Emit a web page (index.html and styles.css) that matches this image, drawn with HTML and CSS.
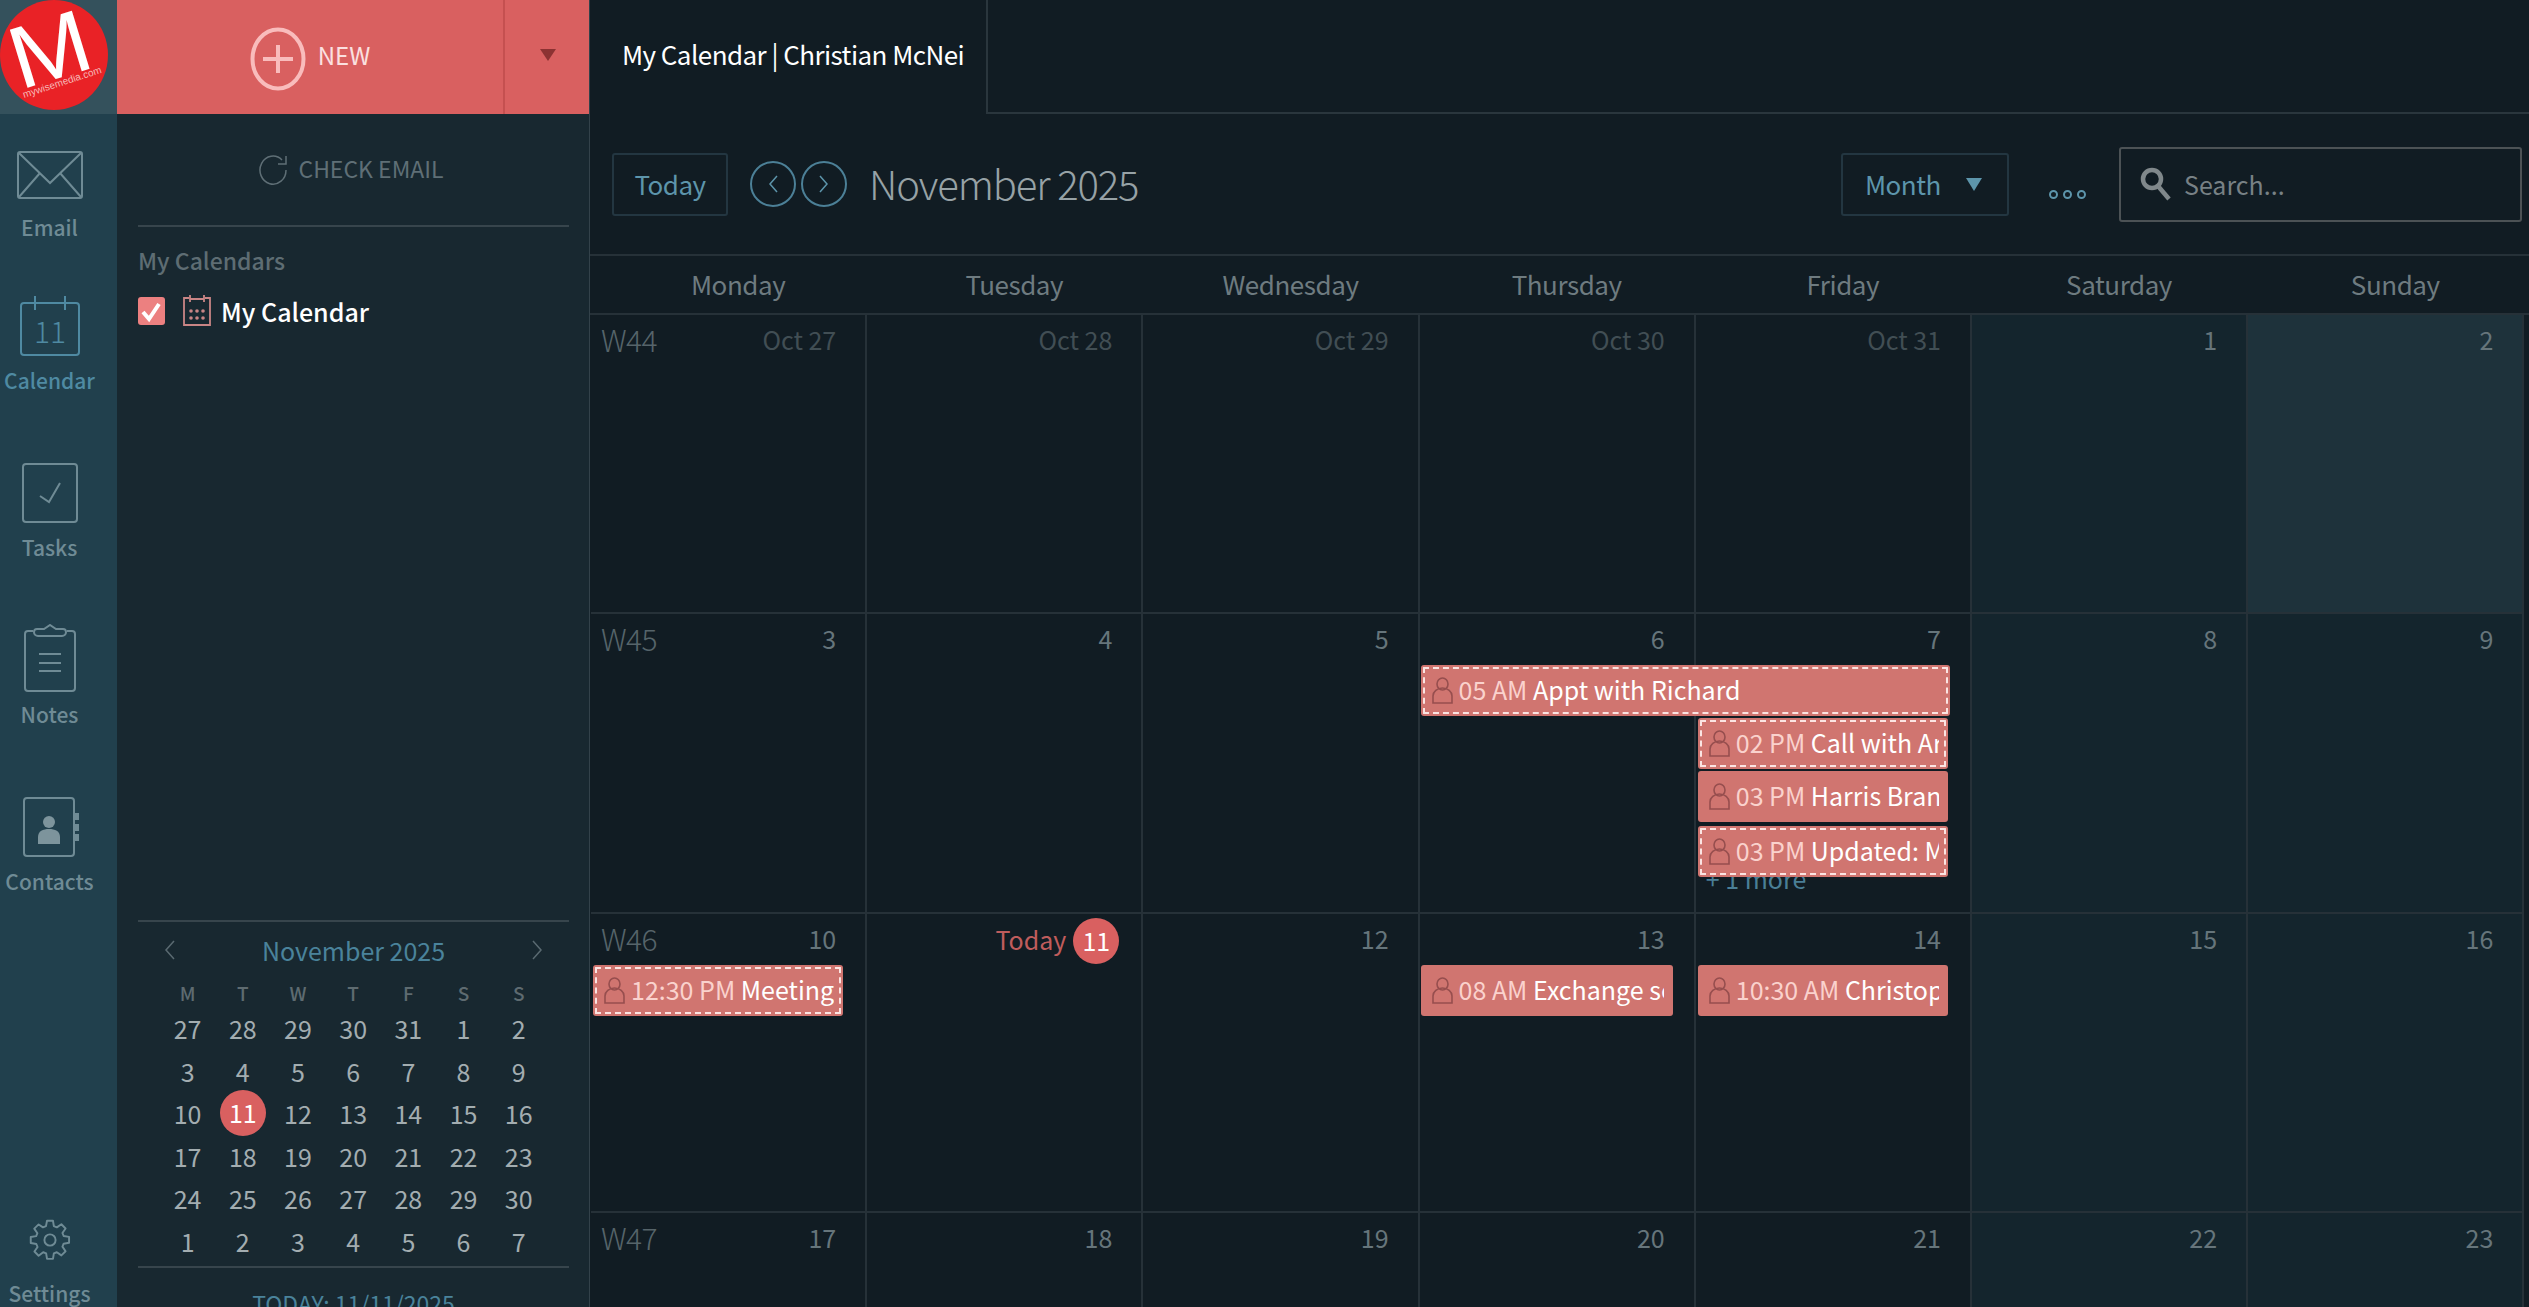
FILE: index.html
```html
<!DOCTYPE html>
<html lang="en">
<head>
<meta charset="utf-8">
<title>My Calendar</title>
<link rel="stylesheet" href="styles.css">
</head>
<body>
<div class="app">
  <nav class="rail">
    <div class="logo-box">
      <svg class="logo" viewBox="0 0 108 110">
        <ellipse cx="54" cy="55" rx="54" ry="55" fill="#e92226"/>
        <text class="logo-m" transform="translate(20 90) rotate(-17) scale(1.1 1)">M</text>
        <text class="logo-url" transform="translate(24 98) rotate(-18)">mywisemedia.com</text>
      </svg>
    </div>
    <a class="rail-item rail-email">
      <svg class="ic-email" viewBox="0 0 66 48" fill="none" stroke="#6f8b95" stroke-width="2"><rect x="1" y="1" width="64" height="46" rx="2"/><path d="M2 2l31 30L64 2M2 46l21-24M64 46L43 22"/></svg>
      <span>Email</span>
    </a>
    <a class="rail-item rail-cal active">
      <svg class="ic-cal" viewBox="0 0 60 60" fill="none" stroke="#4f8aa2" stroke-width="2"><path d="M14 7H4a3 3 0 0 0-3 3v46a3 3 0 0 0 3 3h52a3 3 0 0 0 3-3V10a3 3 0 0 0-3-3H46M15 0v14M45 0v14M15 7h30"/><text class="ic-cal-num" x="30" y="47">11</text></svg>
      <span>Calendar</span>
    </a>
    <a class="rail-item">
      <svg class="ic-tasks" viewBox="0 0 56 60" fill="none" stroke="#6f8b95" stroke-width="2"><rect x="1" y="1" width="54" height="58" rx="3"/><path d="M18 33l9 6 11-19"/></svg>
      <span>Tasks</span>
    </a>
    <a class="rail-item">
      <svg class="ic-notes" viewBox="0 0 52 68" fill="none" stroke="#6f8b95" stroke-width="2"><path d="M9 7H4a3 3 0 0 0-3 3v54a3 3 0 0 0 3 3h44a3 3 0 0 0 3-3V10a3 3 0 0 0-3-3h-5"/><path d="M13 5h7l6-4 6 4h7a3 3 0 0 1 3 3v0a4 4 0 0 1-4 4H14a4 4 0 0 1-4-4v0a3 3 0 0 1 3-3zM15 30h22M15 39h22M15 47h22"/></svg>
      <span>Notes</span>
    </a>
    <a class="rail-item">
      <svg class="ic-contacts" viewBox="0 0 56 60" fill="none" stroke="#6f8b95" stroke-width="2"><rect x="1" y="1" width="50" height="58" rx="3"/><circle cx="26" cy="25" r="6" fill="#7d949c" stroke="none"/><path d="M15 47v-7c0-6 5-8 11-8s11 2 11 8v7z" fill="#7d949c" stroke="none"/><path d="M51 16h5v7h-5zM51 27h5v7h-5zM51 37h5v7h-5z" fill="#6f8b95" stroke="none"/></svg>
      <span>Contacts</span>
    </a>
    <a class="rail-item rail-settings">
      <svg class="ic-gear" viewBox="0 0 24 24" fill="none" stroke="#6f8b95" stroke-width="1.1"><circle cx="12" cy="12" r="3.2"/><path d="M10.3 1h3.4l.5 3.1 1.7.7 2.6-1.8 2.4 2.4-1.8 2.6.7 1.7 3.1.5v3.4l-3.1.5-.7 1.7 1.8 2.6-2.4 2.4-2.6-1.8-1.7.7-.5 3.1h-3.4l-.5-3.1-1.7-.7L5.500 21l-2.400-2.400 1.800-2.600-.7-1.700L1 13.700v-3.400l3.100-.5.7-1.700L3 5.500 5.500 3.100 8 4.800l1.700-.7z" stroke-linejoin="round"/></svg>
      <span>Settings</span>
    </a>
  </nav>

  <aside class="sidebar">
    <div class="new-bar">
      <button class="new-main">
        <svg class="ic-plus" viewBox="0 0 56 64" fill="none" stroke="#f9bcbc" stroke-width="4"><ellipse cx="28" cy="32" rx="25.500" ry="29.500"/><path d="M28 18v28M13 32h30"/></svg>
        <span>NEW</span>
      </button>
      <button class="new-drop"><i class="tri-dark"></i></button>
    </div>
    <div class="check-email">
      <svg class="ic-refresh" viewBox="0 0 30 30" fill="none" stroke="#5f6f76" stroke-width="1.500"><path d="M27 15a13 14 0 1 1-4-10"/><path d="M27 1v8h-8"/></svg>
      <span>CHECK EMAIL</span>
    </div>
    <div class="side-sec">
      <h3>My Calendars</h3>
      <label class="cal-row">
        <span class="check"><svg viewBox="0 0 27 28" fill="none" stroke="#fff" stroke-width="4"><path d="M5 15l6 7 10-15"/></svg></span>
        <svg class="ic-minical" viewBox="0 0 30 32" fill="none" stroke="#c98585" stroke-width="1.800"><path d="M7 3H2v27h26V3h-5M8 0v7M22 0v7M8 4h14"/><g fill="#c98585" stroke="none"><circle cx="9" cy="16" r="1.800"/><circle cx="15" cy="16" r="1.800"/><circle cx="21" cy="16" r="1.800"/><circle cx="9" cy="23" r="1.800"/><circle cx="15" cy="23" r="1.800"/><circle cx="21" cy="23" r="1.800"/></g></svg>
        <span>My Calendar</span>
      </label>
    </div>
    <div class="mini">
      <div class="mini-head">
        <svg class="chev" viewBox="0 0 12 22" fill="none" stroke="#5a6a71" stroke-width="1.500"><path d="M10 2L2 11l8 9"/></svg>
        <span>November 2025</span>
        <svg class="chev" viewBox="0 0 12 22" fill="none" stroke="#5a6a71" stroke-width="1.500"><path d="M2 2l8 9-8 9"/></svg>
      </div>
      <div class="mini-grid">
        <b>M</b><b>T</b><b>W</b><b>T</b><b>F</b><b>S</b><b>S</b>
        <span>27</span><span>28</span><span>29</span><span>30</span><span>31</span><span>1</span><span>2</span>
        <span>3</span><span>4</span><span>5</span><span>6</span><span>7</span><span>8</span><span>9</span>
        <span>10</span><span class="mini-today">11</span><span>12</span><span>13</span><span>14</span><span>15</span><span>16</span>
        <span>17</span><span>18</span><span>19</span><span>20</span><span>21</span><span>22</span><span>23</span>
        <span>24</span><span>25</span><span>26</span><span>27</span><span>28</span><span>29</span><span>30</span>
        <span>1</span><span>2</span><span>3</span><span>4</span><span>5</span><span>6</span><span>7</span>
      </div>
      <div class="mini-foot">TODAY: 11/11/2025</div>
    </div>
  </aside>

  <main class="main">
    <div class="tabs">
      <div class="tab">My Calendar | Christian McNei</div>
      <div class="tab-rest"></div>
    </div>
    <div class="toolbar">
      <button class="btn btn-today">Today</button>
      <button class="round"><svg viewBox="0 0 12 22" fill="none" stroke="#5d95ab" stroke-width="1.500"><path d="M10 3L3 11l7 8"/></svg></button>
      <button class="round"><svg viewBox="0 0 12 22" fill="none" stroke="#5d95ab" stroke-width="1.500"><path d="M2 3l7 8-7 8"/></svg></button>
      <h1>November 2025</h1>
      <button class="btn btn-month"><span>Month</span><i class="tri-blue"></i></button>
      <div class="dots"><i></i><i></i><i></i></div>
      <div class="search">
        <svg viewBox="0 0 32 34" fill="none" stroke="#80888b"><circle cx="12" cy="12" r="9" stroke-width="4.500"/><path d="M18 19l11 13" stroke-width="4.500"/></svg>
        <span>Search...</span>
      </div>
    </div>
    <div class="dow">
      <span>Monday</span><span>Tuesday</span><span>Wednesday</span><span>Thursday</span><span>Friday</span><span>Saturday</span><span>Sunday</span>
    </div>
    <div class="weeks">
      <section class="week">
        <div class="day past"><em>W44</em><u>Oct 27</u></div>
        <div class="day past"><u>Oct 28</u></div>
        <div class="day past"><u>Oct 29</u></div>
        <div class="day past"><u>Oct 30</u></div>
        <div class="day past"><u>Oct 31</u></div>
        <div class="day sat"><u>1</u></div>
        <div class="day sun-hi"><u>2</u></div>
      </section>
      <section class="week">
        <div class="day"><em>W45</em><u>3</u></div>
        <div class="day"><u>4</u></div>
        <div class="day"><u>5</u></div>
        <div class="day"><u>6</u></div>
        <div class="day"><u>7</u></div>
        <div class="day sat"><u>8</u></div>
        <div class="day sat"><u>9</u></div>
        <div class="ev dashed ev-span r2"><svg class="person" viewBox="0 0 21 27"><use href="#person"/></svg><p><s>05 AM</s> Appt with Richard</p></div>
        <div class="ev dashed c5 r3"><svg class="person" viewBox="0 0 21 27"><use href="#person"/></svg><p><s>02 PM</s> Call with Arnold</p></div>
        <div class="ev c5 r4"><svg class="person" viewBox="0 0 21 27"><use href="#person"/></svg><p><s>03 PM</s> Harris Brandt</p></div>
        <div class="ev dashed c5 r5"><svg class="person" viewBox="0 0 21 27"><use href="#person"/></svg><p><s>03 PM</s> Updated: Meeting</p></div>
        <a class="more">+ 1 more</a>
      </section>
      <section class="week">
        <div class="day"><em>W46</em><u>10</u></div>
        <div class="day today"><u>Today</u><b>11</b></div>
        <div class="day"><u>12</u></div>
        <div class="day"><u>13</u></div>
        <div class="day"><u>14</u></div>
        <div class="day sat"><u>15</u></div>
        <div class="day sat"><u>16</u></div>
        <div class="ev dashed c1 r2"><svg class="person" viewBox="0 0 21 27"><use href="#person"/></svg><p><s>12:30 PM</s> Meeting</p></div>
        <div class="ev c4 r2"><svg class="person" viewBox="0 0 21 27"><use href="#person"/></svg><p><s>08 AM</s> Exchange server</p></div>
        <div class="ev c5 r2"><svg class="person" viewBox="0 0 21 27"><use href="#person"/></svg><p><s>10:30 AM</s> Christopher</p></div>
      </section>
      <section class="week">
        <div class="day"><em>W47</em><u>17</u></div>
        <div class="day"><u>18</u></div>
        <div class="day"><u>19</u></div>
        <div class="day"><u>20</u></div>
        <div class="day"><u>21</u></div>
        <div class="day sat"><u>22</u></div>
        <div class="day sat"><u>23</u></div>
      </section>
    </div>
  </main>
</div>
<svg class="defs" width="0" height="0"><defs><g id="person" fill="none" stroke="#964e4e" stroke-width="1.600"><ellipse cx="10.500" cy="7" rx="5.500" ry="6"/><path d="M1 26v-7a9.500 8 0 0 1 19 0v7z"/></g></defs></svg>
</body>
</html>
```
FILE: styles.css
```css
* { box-sizing: border-box; }
html, body { margin: 0; height: 100%; overflow: hidden; background: #111c23; }
body { font-family: "Noto Sans CJK SC", "Noto Sans", sans-serif; }
button { font: inherit; background: none; border: 0; padding: 0; color: inherit; }
h1, h3, p { margin: 0; font-weight: 400; }
em, s, u, i { font-style: normal; text-decoration: none; }
.defs { position: absolute; }

.app { display: flex; height: 1307px; overflow: hidden; }

/* Left rail */
.rail { width: 117px; flex: none; background: #21404d; display: flex; flex-direction: column; height: 1307px; overflow: hidden; padding-right: 18px; }
.logo-box { height: 114px; background: #34515c; flex: none; margin-right: -18px; }
.logo { display: block; width: 108px; height: 110px; }
.logo-m { font-family: "Liberation Sans", sans-serif; font-size: 88px; fill: #fff; }
.logo-url { font-family: "Liberation Sans", sans-serif; font-size: 10px; fill: #f7b9b9; }
.rail-item { height: 167px; flex: none; display: flex; flex-direction: column; justify-content: flex-end; align-items: center; color: #6f8b95; font-size: 21px; font-weight: 500; line-height: 30px; padding-bottom: 1px; white-space: nowrap; }
.rail-item svg { display: block; }
.rail-email { height: 129px; }
.rail-cal { height: 153px; }
.rail-item.active { color: #4f8aa2; }
.ic-email { width: 66px; height: 48px; margin-bottom: 13px; }
.ic-cal { width: 60px; height: 60px; margin-bottom: 9px; }
.ic-cal-num { font-size: 30px; font-weight: 300; fill: #4f8aa2; stroke: none; text-anchor: middle; }
.ic-tasks { width: 56px; height: 60px; margin-bottom: 9px; }
.ic-notes { width: 52px; height: 68px; margin-bottom: 7px; }
.ic-contacts { width: 56px; height: 60px; margin-bottom: 9px; margin-left: 3px; }
.rail-settings { margin-top: auto; height: auto; padding-bottom: 0; line-height: 28px; }
.ic-gear { width: 42px; height: 42px; margin-bottom: 18px; }

/* Sidebar */
.sidebar { width: 473px; flex: none; background: #182830; border-right: 1px solid #33424a; display: flex; flex-direction: column; height: 1307px; overflow: hidden; }
.new-bar { height: 114px; flex: none; background: #d96060; display: flex; margin-right: -1px; }
.new-main { width: 388px; display: flex; align-items: center; justify-content: center; gap: 13px; color: #fbe0e0; font-size: 24px; border-right: 2px solid #c55050; line-height: 30px; }
.new-main span { margin-bottom: 5px; margin-left: -1px; }
.ic-plus { width: 56px; height: 64px; margin-top: 3px; }
.new-drop { flex: 1; display: flex; align-items: center; justify-content: center; }
.tri-dark { display: block; width: 0; height: 0; border-left: 8px solid transparent; border-right: 8px solid transparent; border-top: 12px solid #8c3232; margin-bottom: 4px; }
.check-email { height: 113px; margin: 0 20px 0 21px; border-bottom: 2px solid #37454c; flex: none; display: flex; align-items: center; justify-content: center; gap: 9px; color: #5f6f76; font-size: 23px; line-height: 30px; padding-right: 4px; }
.check-email span { margin-bottom: 3px; }
.ic-refresh { width: 30px; height: 30px; }
.side-sec { padding: 18px 20px 0 21px; }
.side-sec h3 { font-size: 23px; font-weight: 500; color: #5e6d73; line-height: 30px; }
.cal-row { display: flex; align-items: center; margin-top: 20px; color: #fff; font-size: 25px; font-weight: 500; line-height: 32px; }
.check { width: 27px; height: 28px; background: #ec8080; border-radius: 3px; display: block; }
.check svg { display: block; }
.ic-minical { width: 30px; height: 32px; margin: 0 9px 0 17px; }
.mini { margin: auto 20px 0 21px; height: 387px; flex: none; border-top: 2px solid #37454c; }
.mini-head { display: flex; align-items: center; justify-content: space-between; padding: 0 26px; height: 56px; color: #4a839b; font-size: 25px; line-height: 32px; }
.chev { width: 12px; height: 22px; }
.mini-grid { display: grid; grid-template-columns: repeat(7, 55.200px); grid-template-rows: 29px repeat(6, 42.500px); margin: 0 0 0 22px; align-items: center; justify-items: center; color: #a3adb0; font-size: 25px; line-height: 30px; }
.mini-grid b { font-size: 19px; font-weight: 500; color: #5e6b70; }
.mini-today { width: 46px; height: 46px; line-height: 44px; border-radius: 50%; background: #d96060; color: #fff; text-align: center; }
.mini-foot { border-top: 2px solid #37454c; margin-top: 4px; padding-top: 20px; text-align: center; color: #4a839b; font-size: 23px; line-height: 30px; white-space: nowrap; }

/* Main */
.main { flex: 1; min-width: 0; height: 1307px; overflow: hidden; display: flex; flex-direction: column; }
.tabs { display: flex; height: 114px; flex: none; }
.tab { width: 398px; flex: none; border-right: 2px solid #2a363d; padding-left: 32px; color: #fff; font-size: 26px; letter-spacing: -.55px; line-height: 108px; white-space: nowrap; }
.tab-rest { flex: 1; border-bottom: 2px solid #2a363d; }
.toolbar { height: 142px; flex: none; border-bottom: 2px solid #263138; display: flex; align-items: center; padding: 0 7px 0 22px; }
.btn { height: 63px; border: 2px solid #233641; border-radius: 3px; color: #5d95ab; font-size: 26px; letter-spacing: -.5px; line-height: 32px; }
.btn-today { width: 116px; margin-right: 22px; }
.round { width: 46px; height: 46px; border: 2px solid #4c8097; border-radius: 50%; margin-right: 5px; display: flex; align-items: center; justify-content: center; }
.round svg { width: 12px; height: 22px; }
.toolbar h1 { font-size: 40px; letter-spacing: -1.1px; font-weight: 300; color: #97a2a6; margin-left: 17px; line-height: 50px; padding-bottom: 2px; white-space: nowrap; }
.btn-month { width: 168px; margin-left: auto; display: flex; align-items: center; padding-left: 22px; }
.tri-blue { width: 0; height: 0; border-left: 8px solid transparent; border-right: 8px solid transparent; border-top: 13px solid #5d95ab; margin-left: 25px; }
.dots { display: flex; gap: 5px; margin: 20px 33px 0 40px; }
.dots i { width: 9px; height: 9px; border: 2px solid #5d95ab; border-radius: 50%; display: block; }
.search { width: 403px; height: 75px; border: 2px solid #4c5255; border-radius: 3px; display: flex; align-items: center; padding-left: 19px; color: #788185; font-size: 25px; line-height: 32px; }
.search svg { width: 32px; height: 34px; margin-right: 12px; }

.dow { height: 59px; flex: none; display: grid; grid-template-columns: repeat(7, 276.200px); border-bottom: 2px solid #263138; align-items: center; justify-items: center; color: #6e7b80; font-size: 26px; letter-spacing: -.45px; line-height: 32px; padding-bottom: 2px; }
.dow span { padding-left: 20px; }
.weeks { flex: 1; padding-left: 1px; }
.week { display: grid; grid-template-columns: repeat(7, 276.200px); grid-template-rows: 51px 53px 53px 55px 1fr; height: 299.400px; }
.day { grid-row: 1 / -1; display: flex; justify-content: flex-end; align-items: flex-start; padding: 8px 29px 0 0; border-right: 2px solid #263138; border-bottom: 2px solid #263138; position: relative; color: #66757b; font-size: 25px; line-height: 32px; }
.week .day:nth-child(1) { grid-column: 1; }
.week .day:nth-child(2) { grid-column: 2; }
.week .day:nth-child(3) { grid-column: 3; }
.week .day:nth-child(4) { grid-column: 4; }
.week .day:nth-child(5) { grid-column: 5; }
.week .day:nth-child(6) { grid-column: 6; }
.week .day:nth-child(7) { grid-column: 7; }
.day em { position: absolute; left: 10px; top: 6px; font-size: 30px; font-weight: 300; color: #56646a; line-height: 36px; letter-spacing: -.6px; }
.past { color: #414e54; }
.sat { background: #14252d; }
.sun-hi { background: #1e323b; color: #66757b; }
.today { color: #bf5c5c; padding: 4px 22px 0 0; }
.today u { margin-top: 5px; }
.today b { width: 46px; height: 46px; border-radius: 50%; background: #d96060; color: #fff; font-weight: 400; text-align: center; line-height: 44px; margin-left: 7px; }

.ev { background: #d07570; border-radius: 3px; height: 51px; display: flex; align-items: center; padding: 0 9px 0 11px; color: #fff; font-size: 25px; line-height: 32px; position: relative; z-index: 1; width: 250px; overflow: hidden; }
.dashed { outline: 2px dashed #fbe4e2; outline-offset: -4px; }
.person { width: 21px; height: 27px; flex: none; margin-right: 6px; }
.ev p { flex: 1; min-width: 0; overflow: hidden; white-space: nowrap; padding-bottom: 3px; }
.ev s { color: #fad2cd; }
.c1 { grid-column: 1; }
.c4 { grid-column: 4; }
.c5 { grid-column: 5; }
.r2 { grid-row: 2; }
.r3 { grid-row: 3; }
.r4 { grid-row: 4; }
.r5 { grid-row: 5; align-self: start; }
.week .c4 { margin-left: 1px; width: 252px; }
.week .c5 { margin-left: 2px; width: 250px; }
.week .c1 { margin-left: 2px; }
.week .ev-span { grid-column: 4 / span 2; width: 529px; margin-left: 1px; }
.more { grid-column: 5; grid-row: 5; align-self: start; margin: 36px 0 0 10px; color: #4a7f96; font-size: 25px; line-height: 32px; position: relative; white-space: nowrap; }
```
